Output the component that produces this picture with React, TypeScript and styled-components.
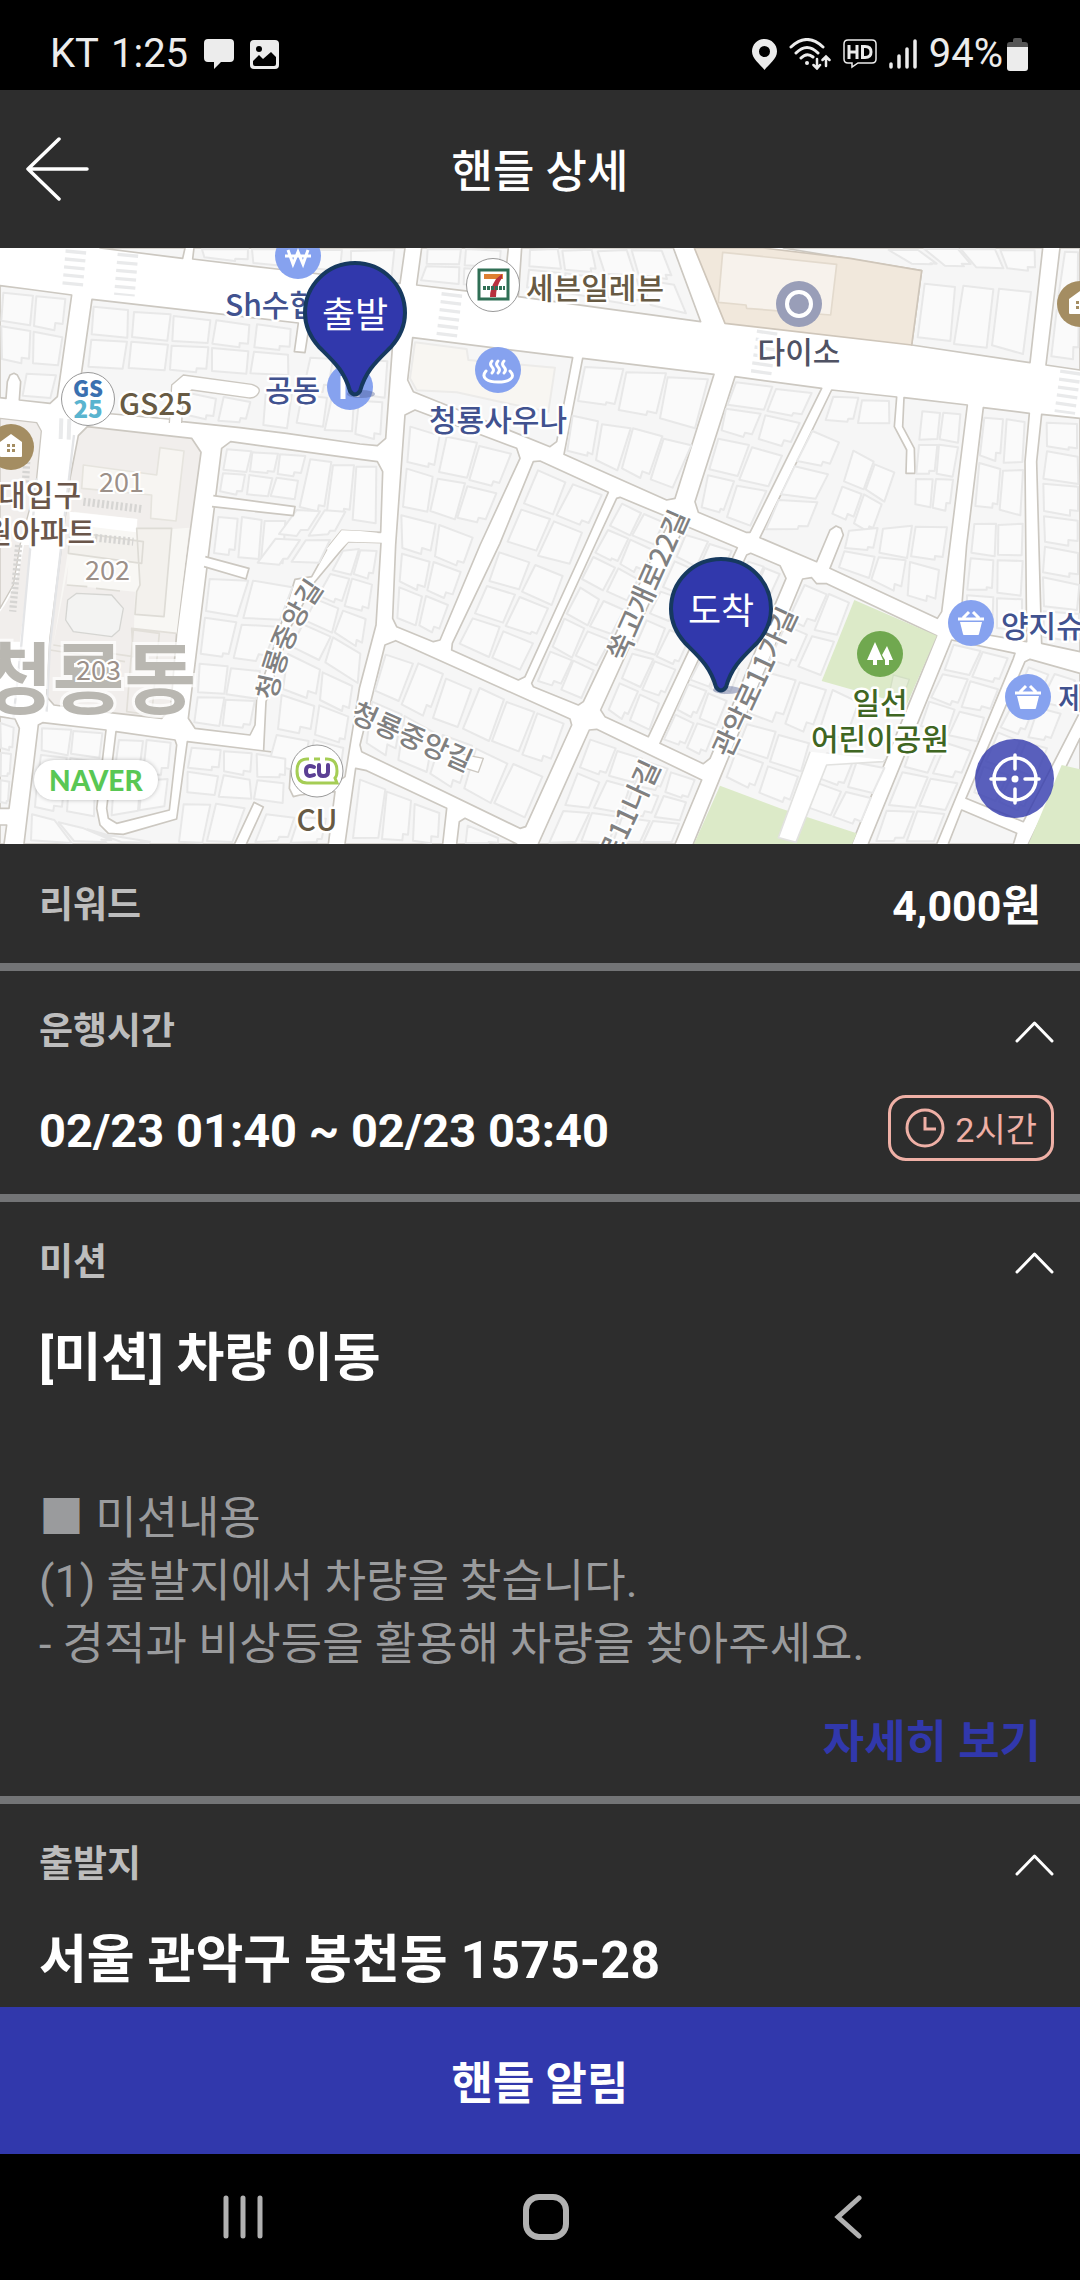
import React, { useState } from "react";
import styled, { createGlobalStyle } from "styled-components";

const color = {
  panel: "#2d2d2d",
  line: "#737476",
  accent: "#3138ac",
  muted: "#bdbdbd",
  body: "#9a9b9d",
  coral: "#efb0a6",
  status: "#ececec",
  nav: "#b1b1b1",
};

const Global = createGlobalStyle`
  *, *::before, *::after { box-sizing: border-box; }
  body { margin: 0; background: #000; }
  button { font: inherit; color: inherit; background: none; border: 0; padding: 0; cursor: pointer; }
  h1, h2, h3, p { margin: 0; }
  svg { display: block; flex: none; }
`;

const Screen = styled.div`
  display: flex;
  flex-direction: column;
  height: 100vh;
  background: ${color.panel};
  color: #fff;
  font-family: Roboto, "Noto Sans CJK KR", sans-serif;
`;

const StatusBar = styled.div`
  flex: none;
  display: flex;
  align-items: center;
  justify-content: space-between;
  height: 90px;
  padding: 18px 52px 0 50px;
  background: #000;
  color: ${color.status};
  font-size: 40px;
  line-height: 48px;
`;

const StatusGroup = styled.div<{ $gap: number }>`
  display: flex;
  align-items: center;
  gap: ${(p) => p.$gap}px;
`;

const TopBar = styled.header`
  flex: none;
  display: grid;
  grid-template-columns: 120px 1fr 120px;
  align-items: center;
  height: 158px;
`;

const BackButton = styled.button`
  display: flex;
  align-items: center;
  height: 100%;
  padding-left: 24px;
`;

const PageTitle = styled.h1`
  padding-top: 8px;
  text-align: center;
  font-size: 45px;
  font-weight: 500;
  line-height: 60px;
`;

const Scroll = styled.main`
  flex: 1;
  min-height: 0;
  overflow-y: auto;
  scrollbar-width: none;
`;

const MapFrame = styled.div`
  position: relative;
  height: 596px;
  overflow: hidden;
  background: #fff;
`;

const MapCanvas = styled.svg`
  width: 100%;
  height: 100%;
  font-family: "Noto Sans CJK KR", sans-serif;
`;

const MapBadge = styled.a`
  position: absolute;
  left: 34px;
  bottom: 44px;
  padding: 0 15px;
  border-radius: 20px;
  background: #fff;
  box-shadow: 0 0 4px rgba(0, 0, 0, 0.25);
  color: #59c754;
  font-family: Lato, "Open Sans", sans-serif;
  font-size: 28px;
  font-weight: 900;
  line-height: 40px;
  text-decoration: none;
`;

const LocateButton = styled.button`
  position: absolute;
  right: 26px;
  bottom: 26px;
  display: grid;
  place-items: center;
  width: 79px;
  height: 79px;
  border-radius: 50%;
  background: rgba(49, 56, 172, 0.8);
`;

const Section = styled.section`
  & + & {
    border-top: 8px solid ${color.line};
  }
`;

const SummaryRow = styled.div`
  display: flex;
  align-items: center;
  justify-content: space-between;
  height: 119px;
  padding: 4px 39px 0;
`;

const Label = styled.span`
  color: ${color.muted};
  font-size: 37px;
  font-weight: 700;
  line-height: 48px;
`;

const Amount = styled.strong`
  font-size: 43px;
  font-weight: 700;
  line-height: 56px;
`;

const SectionToggle = styled.button`
  display: flex;
  align-items: center;
  justify-content: space-between;
  width: 100%;
  height: 122px;
  padding: 0 26px 0 39px;
`;

const ScheduleRow = styled.div`
  display: flex;
  align-items: center;
  justify-content: space-between;
  height: 101px;
  padding: 0 26px 32px 39px;
`;

const Period = styled.span`
  padding-top: 6px;
  font-size: 47px;
  font-weight: 700;
  line-height: 60px;
`;

const Duration = styled.span`
  display: flex;
  align-items: center;
  gap: 10px;
  height: 66px;
  padding: 0 14px;
  border: 3px solid ${color.coral};
  border-radius: 18px;
  color: ${color.coral};
  font-size: 34px;
  font-weight: 400;
`;

const Heading = styled.h2`
  padding: 2px 39px 0;
  font-size: 52px;
  font-weight: 700;
  line-height: 66px;
`;

const MissionText = styled.p`
  padding: 95px 39px 35px;
  color: ${color.body};
  font-size: 45px;
  line-height: 63px;
  white-space: pre-line;
`;

const MoreRow = styled.div`
  display: flex;
  justify-content: flex-end;
  padding: 0 39px 21px;
`;

const MoreButton = styled.button`
  color: ${color.accent};
  font-size: 45px;
  font-weight: 700;
  line-height: 64px;
`;

const PrimaryButton = styled.button`
  flex: none;
  width: 100%;
  height: 147px;
  background: ${color.accent};
  color: #fff;
  font-size: 45px;
  font-weight: 700;
`;

const NavBar = styled.nav`
  flex: none;
  display: flex;
  align-items: center;
  justify-content: space-between;
  height: 126px;
  padding: 0 161px 0 172px;
  background: #000;
`;

const NavButton = styled.button`
  display: grid;
  place-items: center;
  width: 142px;
  height: 100%;
`;

/* ---------- map data: three units to one pixel ---------- */

const blocks = [
  "0,122 80,132 215,150 172,455 150,475 58,465 62,410 52,390 42,385 30,390 22,410 18,460 0,458",
  "300,9 548,40 555,9",
  "582,9 578,42 830,72 1200,115 1215,9",
  "276,163 895,234 883,320 915,323 928,240 1180,268 1157,580 1132,602 1080,597 860,565 720,548 548,530 505,522 340,507 228,500",
  "665,610 692,590 1080,643 1132,650 1148,680 1142,862 1025,856 985,905 935,995 885,1003 830,1180 770,1360 765,1440 750,1470 585,1450 565,1420",
  "1045,890 1143,893 1128,1140 1078,1330 1035,1595 1020,1605 788,1575 798,1370 870,1150 945,1010",
  "1238,278 1718,338 1670,590 1650,605 1240,440 1223,405",
  "1215,510 1245,495 1550,610 1560,640 1440,900 1320,1185 1300,1190 1190,1145 1178,1120 1187,900",
  "1600,650 1620,648 1825,742 1755,900 1575,1295 1555,1305 1355,1215 1357,1195 1500,895",
  "1850,760 1860,757 2012,820 1750,1370 1735,1380 1600,1325 1595,1315 1785,900",
  "1748,340 2142,388 2025,760 2000,765 1692,628",
  "2050,850 2062,845 2212,908 1945,1475 1815,1415 1802,1395",
  "2240,930 2252,925 2340,962 2358,1000 2130,1540 2110,1556 1980,1495",
  "2205,395 2465,430 2250,862 2238,862 2095,802 2085,770",
  "2495,435 2690,456 2683,545 2720,615 2718,685 2745,685 2743,610 2708,545 2712,458 2902,480 2850,900 2825,1100 2812,1120 2490,970 2530,870 2523,850 2508,843 2490,855 2450,950 2280,878",
  "2950,488 3088,505 3075,650 3080,1190 2880,1155 2900,900",
  "3125,508 3240,520 3240,1220 3125,1195 3110,650",
  "1265,9 1250,120 1390,137 1510,150 1525,9",
  "1565,9 1555,155 2102,230 2020,9",
  "2350,9 2765,77 2735,300 3090,353 3128,9",
  "3180,9 3138,360 3240,375 3240,9",
  "2408,1002 2435,998 2450,1016 2480,1016 2810,1172 2555,1797 2080,1797 2160,1600",
  "2855,1185 3045,1225 3040,1240 2810,1797 2605,1797",
  "3075,1250 3090,1243 3240,1285 3240,1400 3070,1730 2898,1660",
  "2885,1695 3050,1765 3040,1797 2845,1797",
  "3240,1480 3085,1797 3240,1797",
  "0,1415 45,1422 58,1450 27,1690 0,1690",
  "0,1740 20,1740 12,1797 0,1797",
  "115,1440 128,1433 318,1455 290,1690 300,1740 325,1765 370,1768 530,1722 562,1490 875,1528 868,1630 880,1655 900,1650 1005,1640 985,1797 72,1797",
  "348,1460 525,1485 530,1500 508,1695 350,1735 325,1720 320,1690",
  "1067,1570 1100,1577 1340,1690 1328,1797 1035,1797",
  "1378,1730 1395,1720 1550,1797 1370,1797",
  "1155,1200 1187,1187 1710,1422 1715,1440 1577,1745 1560,1750 1085,1520 1080,1500",
  "1768,1455 1790,1453 2105,1605 2025,1797 1615,1797",
];

/* four corners, clockwise from the upper left, then columns and rows of lots */
type Lots = [number, number, number, number, number, number, number, number, number, number];
const lots: Lots[] = [
  [0, 130, 205, 158, 180, 370, 0, 350, 2, 2],
  [70, 380, 180, 390, 160, 465, 65, 455, 1, 1],
  [600, 9, 1190, 9, 1180, 100, 600, 40, 4, 1],
  [276, 178, 880, 245, 870, 400, 255, 370, 5, 2],
  [930, 330, 1165, 340, 1150, 590, 880, 545, 3, 2],
  [560, 440, 760, 465, 740, 540, 555, 520, 2, 1],
  [790, 425, 880, 430, 865, 555, 780, 545, 1, 1],
  [675, 610, 920, 630, 885, 770, 655, 745, 3, 2],
  [930, 630, 1135, 660, 1130, 850, 890, 800, 3, 1],
  [650, 800, 860, 820, 850, 960, 635, 930, 3, 1],
  [890, 790, 1050, 790, 960, 960, 760, 960, 2, 2],
  [620, 985, 890, 1020, 790, 1260, 590, 1240, 2, 2],
  [590, 1250, 790, 1270, 750, 1460, 575, 1440, 2, 2],
  [1030, 910, 1135, 905, 1075, 1320, 860, 1200, 2, 4],
  [860, 1220, 1070, 1320, 1030, 1590, 800, 1570, 2, 3],
  [1225, 530, 1545, 620, 1450, 850, 1200, 790, 3, 2],
  [1200, 800, 1430, 870, 1315, 1175, 1190, 1130, 2, 3],
  [1610, 660, 1815, 745, 1710, 970, 1510, 900, 2, 2],
  [1500, 910, 1705, 985, 1565, 1290, 1370, 1205, 2, 3],
  [1860, 770, 2000, 825, 1885, 1080, 1740, 1010, 2, 3],
  [1735, 1020, 1880, 1090, 1745, 1365, 1605, 1310, 2, 3],
  [1750, 350, 2130, 395, 2090, 560, 1720, 470, 3, 1],
  [1710, 500, 2085, 590, 2020, 750, 1700, 620, 4, 1],
  [2060, 860, 2200, 915, 2085, 1160, 1940, 1110, 2, 3],
  [1935, 1120, 2080, 1170, 1945, 1465, 1815, 1400, 2, 3],
  [2245, 945, 2345, 980, 2240, 1240, 2110, 1180, 2, 3],
  [2105, 1220, 2225, 1270, 2115, 1540, 1985, 1490, 2, 3],
  [2205, 405, 2450, 440, 2370, 610, 2150, 560, 2, 2],
  [2145, 570, 2365, 620, 2250, 850, 2095, 790, 2, 2],
  [2495, 445, 2675, 465, 2670, 545, 2460, 535, 2, 1],
  [2430, 550, 2530, 590, 2420, 860, 2290, 860, 1, 3],
  [2560, 610, 2690, 680, 2620, 870, 2490, 810, 2, 2],
  [2760, 490, 2890, 500, 2850, 800, 2740, 790, 2, 3],
  [2545, 850, 2845, 830, 2810, 1090, 2510, 970, 3, 2],
  [2950, 500, 3080, 515, 3065, 820, 2920, 790, 2, 2],
  [2915, 830, 3070, 830, 3070, 1170, 2890, 1140, 2, 3],
  [3130, 520, 3240, 530, 3240, 1200, 3120, 1180, 1, 7],
  [1270, 9, 1515, 9, 1505, 130, 1260, 110, 2, 2],
  [1580, 9, 1990, 9, 2070, 210, 1570, 130, 4, 2],
  [2640, 9, 3110, 9, 3110, 80, 2740, 60, 4, 1],
  [2770, 90, 3100, 130, 3080, 340, 2745, 290, 3, 1],
  [3190, 9, 3240, 9, 3240, 350, 3150, 340, 1, 2],
  [2410, 1015, 2560, 1065, 2465, 1300, 2300, 1250, 2, 2],
  [2300, 1260, 2590, 1360, 2540, 1500, 2240, 1420, 3, 1],
  [2235, 1430, 2440, 1490, 2370, 1690, 2165, 1600, 2, 2],
  [2475, 1520, 2660, 1560, 2580, 1750, 2410, 1690, 2, 2],
  [2860, 1195, 3035, 1235, 2930, 1500, 2750, 1450, 2, 3],
  [2745, 1465, 2920, 1510, 2800, 1797, 2615, 1797, 2, 3],
  [3080, 1260, 3235, 1295, 3070, 1710, 2910, 1650, 2, 4],
  [0, 1430, 45, 1440, 25, 1680, 0, 1680, 1, 3],
  [125, 1440, 310, 1460, 285, 1720, 95, 1690, 2, 3],
  [90, 1700, 320, 1770, 510, 1797, 80, 1797, 3, 1],
  [350, 1470, 520, 1490, 500, 1690, 330, 1720, 2, 2],
  [570, 1500, 865, 1535, 860, 1680, 550, 1650, 3, 2],
  [545, 1660, 740, 1680, 700, 1797, 530, 1797, 2, 1],
  [790, 1700, 990, 1720, 975, 1797, 750, 1797, 2, 1],
  [1075, 1590, 1325, 1700, 1320, 1797, 1050, 1797, 3, 1],
  [1390, 1730, 1500, 1780, 1500, 1797, 1385, 1797, 1, 1],
  [1160, 1210, 1700, 1430, 1650, 1570, 1110, 1350, 6, 1],
  [1105, 1360, 1640, 1585, 1570, 1735, 1090, 1500, 5, 1],
  [1770, 1470, 2095, 1605, 2020, 1797, 1640, 1797, 4, 3],
];

const wobble = (n: number) => {
  const v = Math.sin(n * 127.1) * 43758.5453;
  return v - Math.floor(v) - 0.5;
};

const buildings: string[] = lots.flatMap((lot, index) => {
  const [ax, ay, bx, by, cx, cy, dx, dy, cols, rows] = lot;
  const at = (u: number, v: number) => {
    const x = ax * (1 - u) * (1 - v) + bx * u * (1 - v) + cx * u * v + dx * (1 - u) * v;
    const y = ay * (1 - u) * (1 - v) + by * u * (1 - v) + cy * u * v + dy * (1 - u) * v;
    return `${Math.round(x)},${Math.round(y)}`;
  };
  const result: string[] = [];
  for (let r = 0; r < rows; r += 1) {
    for (let c = 0; c < cols; c += 1) {
      const seed = index * 31 + r * 7 + c * 3 + 1;
      const u = (f: number, k: number) => (c + f + wobble(seed + k) * 0.1) / cols;
      const v = (f: number, k: number) => (r + f + wobble(seed + k) * 0.1) / rows;
      const corners = [at(u(0.07, 1), v(0.08, 2)), at(u(0.93, 3), v(0.08, 4))];
      if (wobble(seed + 11) > 0) {
        const nu = u(0.72, 5);
        const nv = v(0.8, 6);
        corners.push(at(u(0.93, 3), nv), at(nu, nv), at(nu, v(0.94, 7)));
      } else {
        corners.push(at(u(0.93, 5), v(0.92, 6)));
      }
      corners.push(at(u(0.07, 8), v(0.92, 9)));
      result.push(corners.join(" "));
    }
  }
  return result;
});

const crossings = [
  "M228,16 L217,132",
  "M384,26 L373,152",
  "M1356,145 L1340,275",
  "M2302,258 L2283,388",
  "M3212,378 L3194,505",
];

type PlaceProps = { x: number; y: number; fill: string; anchor?: "start" | "middle" | "end"; size?: number; children: string };
const Place = ({ x, y, fill, anchor = "start", size = 30, children }: PlaceProps) => (
  <text x={x} y={y} fill={fill} textAnchor={anchor} fontSize={size} fontWeight={500} stroke="#fff" strokeWidth={5} strokeLinejoin="round" paintOrder="stroke">
    {children}
  </text>
);

const Street = ({ x, y, turn, anchor = "middle", children }: { x: number; y: number; turn: number; anchor?: "middle" | "end"; children: string }) => (
  <text transform={`translate(${x} ${y}) rotate(${turn})`} y={10} textAnchor={anchor} fill="#808080" fontSize={28} fontWeight={500} stroke="#fff" strokeWidth={4} strokeLinejoin="round" paintOrder="stroke">
    {children}
  </text>
);

const Pin = ({ x, y, children }: { x: number; y: number; children: string }) => (
  <g transform={`translate(${x} ${y})`}>
    <ellipse cx={6} cy={81} rx={14} ry={4} fill="#4a5a90" opacity={0.4} />
    <path
      d="M0,-50 A50,50 0 0 1 50,0 C50,15 44,25 36,34 C22,48 11,57 5,78 Q0,85 -5,78 C-11,57 -22,48 -36,34 C-44,25 -50,15 -50,0 A50,50 0 0 1 0,-50 Z"
      fill="#3138ac"
      stroke="#16395f"
      strokeWidth={4}
    />
    <text y={15} textAnchor="middle" fontSize={36} fontWeight={400} fill="#fff">
      {children}
    </text>
  </g>
);

const House = ({ x, y }: { x: number; y: number }) => (
  <g transform={`translate(${x} ${y})`}>
    <circle r={23} fill="#a48d62" />
    <path d="M-11,9 V-5 L0,-13 L11,-5 V9 Q11,10 10,10 H-10 Q-11,10 -11,9 Z" fill="#fff" />
    <path d="M-4,-3 h3 v3 h-3 z M1,-3 h3 v3 h-3 z M-4,2 h3 v3 h-3 z M1,2 h3 v3 h-3 z" fill="#a48d62" />
  </g>
);

const Basket = ({ x, y }: { x: number; y: number }) => (
  <g transform={`translate(${x} ${y})`}>
    <circle r={23} fill="#86a2ef" />
    <path d="M-13,-4 H13 M-8,-5 L-2,-11 M8,-5 L2,-11" stroke="#fff" strokeWidth={3} fill="none" />
    <path d="M-11,-1 H11 L8,11 Q8,12 7,12 H-7 Q-8,12 -8,11 Z" fill="#fff" />
  </g>
);

const navy = "#41528f";
const brown = "#675a43";

const RouteMap = () => (
  <MapCanvas viewBox="0 0 1080 596" preserveAspectRatio="xMidYMid slice" role="img" aria-label="출발지와 도착지 지도">
    <g transform="translate(0 -3) scale(0.333333)" strokeLinejoin="round">
      {blocks.map((points) => (
        <polygon key={points} points={points} fill="#f6f6f6" stroke="#ccc8c1" strokeWidth={5} />
      ))}
      {buildings.map((points) => (
        <polygon key={points} points={points} fill="#fafafa" stroke="#e8e8e8" strokeWidth={6} />
      ))}
      <polygon points="2083,9 2175,235 2735,300 2765,77 2550,40 2290,9" fill="#f1e8dc" stroke="#cfc6ba" strokeWidth={5} />
      <polygon points="2168,22 2510,58 2492,210 2240,190 2238,180 2155,172" fill="#f7f2ec" stroke="#e3dacd" strokeWidth={5} />
      <path d="M1245,292 L1400,312 L1405,345 L1665,368 L1645,500 L1520,475 L1370,442 L1250,436 L1230,400 Z" fill="#f8f6f2" stroke="#ecebe9" strokeWidth={6} />
      <path d="M508,534 L515,420 L550,390 L755,418 Q786,428 775,445 Q765,463 740,458 L575,435 L550,450 L545,534" fill="#fff" stroke="#ccc8c1" strokeWidth={4} />
      <path d="M640,752 L885,785 L880,812 L636,785" fill="#fff" stroke="#ccc8c1" strokeWidth={5} />
      <path d="M616,935 L747,970 L738,1002 L612,965" fill="#fff" stroke="#ccc8c1" strokeWidth={5} />
      <path d="M1132,863 L1080,858 L1025,856 L980,912 L1005,930 L1045,890 L1150,893" fill="#fff" />
      <path d="M702,1800 L762,1672 L790,1686 L738,1800" fill="#fff" stroke="#ccc8c1" strokeWidth={5} />
      <path d="M1375,1525 L1450,1540 L1435,1582 L1350,1555" fill="#fff" stroke="#ccc8c1" strokeWidth={4} />

      <polygon points="235,572 262,545 575,580 603,622 565,900 530,1165 512,1390 485,1420 330,1403 162,1380 140,1355 150,1180 185,900 210,700" fill="#f1eeec" stroke="#ccc8c1" strokeWidth={5} />
      <path d="M250,660 L470,690 L480,608 L552,618 L528,828 L452,820 L455,750 L245,730 Z" fill="#f7f5f2" stroke="#e6e4de" strokeWidth={5} />
      <path d="M222,800 L412,822 L412,860 L568,848 L530,1165 L402,1150 L405,1040 L200,1020 L205,960 L160,1200 Z" fill="#f8f7f4" />
      <path d="M208,800 L412,822 L408,862 L210,838 Z" fill="#fff" />
      <path d="M210,860 L430,890 L425,955 L205,925 Z M410,850 L515,850 L492,1115 L405,1108 L410,1040 L420,1020 Z M200,1020 L262,1025 M288,1030 L360,1038" fill="#f3f1ed" stroke="#dedcd6" strokeWidth={5} />
      <path d="M160,1200 L400,1235 L395,1150 L530,1165 M400,1155 L478,1165 L455,1410 L380,1400 Z M150,1215 L375,1250" fill="none" stroke="#e2dfd9" strokeWidth={5} />
      <path d="M230,1045 L335,1050 L370,1090 L358,1155 L335,1175 L220,1160 L197,1125 L203,1065 Z" fill="#f3f3f2" stroke="#d5d5d2" strokeWidth={4} />
      <path d="M250,770 L425,792 M285,878 L400,890" stroke="#d6d5d3" strokeWidth={24} strokeDasharray="7 7" />
      <polygon points="0,520 110,533 124,558 108,720 60,900 40,1020 0,1090" fill="#f1eeec" stroke="#ccc8c1" strokeWidth={4} />
      <path d="M0,1100 Q50,1040 72,900 L95,900 L60,1190 L0,1190 Z" fill="#f1eeec" />
      <path d="M80,650 L76,720 M56,900 L38,1100" stroke="#d6d5d3" strokeWidth={22} strokeDasharray="7 7" />
      <path d="M110,700 L64,1200 L40,1420" stroke="#e4e5e7" strokeWidth={7} fill="none" />
      <path d="M222,570 L200,760 L150,1200 L140,1400" stroke="#e4e5e7" strokeWidth={7} fill="none" />
      <path d="M184,520 L182,582 M208,522 L206,584" stroke="#e9eaeb" strokeWidth={12} />

      <polygon points="2563,1065 2810,1172 2720,1380 2465,1308" fill="#dceac8" />
      <path d="M2680,1290 L2728,1303 L2708,1360 L2668,1345 Z" fill="#e5edd8" stroke="#d3dfc4" strokeWidth={4} />
      <polygon points="2160,1622 2340,1690 2570,1765 2556,1797 2082,1797" fill="#dceac8" />
      <polygon points="3185,1560 3240,1573 3240,1797 3086,1797" fill="#dceac8" />
      <path d="M2430,1520 L2335,1778 L2388,1792 L2480,1560 L2650,1550 L2655,1545" fill="#fff" stroke="#e2e2e0" strokeWidth={5} />
      {crossings.map((d) => (
        <path key={d} d={d} stroke="#e9eaeb" strokeWidth={62} strokeDasharray="10 14" fill="none" />
      ))}
    </g>

    <circle cx={298} cy={8} r={23} fill="#86a2ef" />
    <path d="M288,2 L293,16 L298,4 L303,16 L308,2 M285,8 H311" stroke="#fff" strokeWidth={3} fill="none" />
    <circle cx={350} cy={139} r={23} fill="#86a2ef" />
    <path d="M343,128 V151 M357,128 V149" stroke="#fff" strokeWidth={5} />
    <circle cx={498} cy={122} r={23} fill="#86a2ef" />
    <path d="M486,123 C480,130 488,134 498,134 C508,134 517,130 510,123" stroke="#fff" strokeWidth={3} fill="none" strokeLinecap="round" />
    <path d="M492,113 q-3,3 0,6 q3,3 0,6 M498,113 q-3,3 0,6 q3,3 0,6 M504,113 q-3,3 0,6 q3,3 0,6" stroke="#fff" strokeWidth={3} fill="none" strokeLinecap="round" />
    <circle cx={799} cy={56} r={23} fill="#999eb8" />
    <circle cx={799} cy={56} r={12} fill="none" stroke="#fff" strokeWidth={4} />
    <House x={11} y={199} />
    <House x={1080} y={56} />
    <Basket x={971} y={375} />
    <Basket x={1028} y={449} />
    <circle cx={880} cy={406} r={23} fill="#70a84f" />
    <path d="M875,394 L883,412 H877 V417 H873 V412 H867 Z M887,398 L893,412 H889 V417 H885 V412 L882,407 Z" fill="#fff" />

    <circle cx={88} cy={151} r={26.500} fill="#fff" stroke="#999" />
    <text x={88} y={149} textAnchor="middle" fontSize={22} fontWeight={900} fill="#3a70b0">GS</text>
    <text x={88} y={170} textAnchor="middle" fontSize={24} fontWeight={900} fill="#59b4cf">25</text>
    <circle cx={493} cy={37} r={26.500} fill="#fff" stroke="#999" />
    <rect x={479} y={22} width={29} height={29} fill="#fff" stroke="#2f6f55" strokeWidth={3} />
    <path d="M484,26 H503 V31 H484 Z" fill="#dd7f32" />
    <path d="M496,31 L502,26 V30 Q496,38 496,49 H490 Q490,40 496,31 Z" fill="#b8303f" />
    <path d="M483,40 H505" stroke="#2f6f55" strokeWidth={4} strokeDasharray="3 1" />
    <circle cx={317} cy={523} r={26} fill="#fff" stroke="#999" />
    <path d="M309,511 H307 Q297,511 297,523 Q297,535 307,535 H337 L335,530 Q337,528 337,523 Q337,511 327,511 H325 M314,511 H320" fill="none" stroke="#a5cd55" strokeWidth={3} />
    <path d="M314,519 Q306,516 306,523 Q306,530 314,527 M319,517 V524 Q319,528 323,528 Q328,528 328,524 V517" fill="none" stroke="#5b3f94" strokeWidth={4} strokeLinecap="round" />

    <text x={196} y={460} textAnchor="end" fontSize={78} fontWeight={700} fill="#b9b7b1" stroke="#fff" strokeOpacity={0.7} strokeWidth={6} paintOrder="stroke">청룡동</text>
    <g fontSize={27} fill="#9c9089" stroke="#fff" strokeWidth={4} paintOrder="stroke">
      <text x={99} y={244}>201</text>
      <text x={85} y={332}>202</text>
      <text x={76} y={432}>203</text>
    </g>
    <Place x={225} y={68} fill={navy}>Sh수협</Place>
    <Place x={265} y={153} fill={navy}>공동</Place>
    <Place x={429} y={183} fill={navy}>청룡사우나</Place>
    <Place x={1001} y={389} fill={navy}>양지슈퍼</Place>
    <Place x={1058} y={461} fill={navy}>제일</Place>
    <Place x={119} y={167} fill={brown}>GS25</Place>
    <Place x={526} y={51} fill={brown}>세븐일레븐</Place>
    <Place x={317} y={583} anchor="middle" fill={brown}>CU</Place>
    <Place x={799} y={115} anchor="middle" fill="#4f5263">다이소</Place>
    <Place x={81} y={258} anchor="end" fill="#6a564a">대입구</Place>
    <Place x={95} y={295} anchor="end" fill="#6a564a">원아파트</Place>
    <Place x={880} y={466} anchor="middle" fill="#3f6622">일선</Place>
    <Place x={880} y={502} anchor="middle" fill="#3f6622">어린이공원</Place>

    <path id="alley" d="M276,453 Q286,392 325,339" fill="none" />
    <text fill="#808080" fontSize={27} fontWeight={500} stroke="#fff" strokeWidth={4} paintOrder="stroke">
      <textPath href="#alley">청룡중앙길</textPath>
    </text>
    <Street x={412} y={489} turn={24}>청룡중앙길</Street>
    <Street x={648} y={337} turn={-66}>쑥고개로22길</Street>
    <Street x={755} y={434} turn={-65}>관악로11가길</Street>
    <Street x={652} y={514} turn={-65} anchor="end">관악로11나길</Street>

    <Pin x={355} y={65}>출발</Pin>
    <Pin x={721} y={361}>도착</Pin>
  </MapCanvas>
);

/* ---------- icons ---------- */

const ChatIcon = () => (
  <svg width="30" height="30" viewBox="0 0 30 30" fill={color.status} aria-hidden="true">
    <path d="M4,0 H26 Q30,0 30,4 V19 Q30,23 26,23 H17 L10,30 V23 H4 Q0,23 0,19 V4 Q0,0 4,0 Z" />
  </svg>
);

const PhotoIcon = () => (
  <svg width="29" height="29" viewBox="0 0 29 29" aria-hidden="true">
    <rect width="29" height="29" rx="4" fill={color.status} />
    <circle cx="9" cy="9" r="3" fill="#000" />
    <path d="M3,21 L9,15 L13,19 L21,12 L26,17 V24 Q26,26 24,26 H5 Q3,26 3,24 Z" fill="#000" />
  </svg>
);

const PlaceIcon = () => (
  <svg width="25" height="31" viewBox="0 0 25 31" fill={color.status} aria-hidden="true">
    <path fillRule="evenodd" d="M12.500,0 C19.500,0 25,5.500 25,12.500 C25,20 17,25 12.500,31 C8,25 0,20 0,12.500 C0,5.500 5.500,0 12.500,0 Z M12.500,7 A5.500,5.500 0 1 0 12.500,18 A5.500,5.500 0 1 0 12.500,7 Z" />
  </svg>
);

const WifiIcon = () => (
  <svg width="42" height="32" viewBox="0 0 42 32" fill="none" stroke={color.status} strokeWidth="3" strokeLinecap="round" aria-hidden="true">
    <path d="M2,9 Q18,-6 34,9 M7,15 Q18,4 29,15 M12,20 Q18,14 24,19" />
    <circle cx="18" cy="25" r="2" fill={color.status} stroke="none" />
    <path d="M28,21 V30 M24.500,27 L28,30.500 L31,27 M37,28 V19 M33.500,22 L37,18.500 L40.500,22" strokeWidth="2.500" />
  </svg>
);

const HdIcon = () => (
  <svg width="34" height="30" viewBox="0 0 34 30" fill="none" stroke={color.status} aria-hidden="true">
    <path d="M5,1 H29 Q33,1 33,5 V20 Q33,24 29,24 H15 L9,28 V24 H5 Q1,24 1,20 V5 Q1,1 5,1 Z" strokeWidth="1.500" />
    <path d="M6,6 V20 M14,6 V20 M6,13 H14 M19.500,7.500 V18.500 H22 Q28,18.500 28,13 Q28,7.500 22,7.500 Z" strokeWidth="3" />
  </svg>
);

const SignalIcon = () => (
  <svg width="28" height="30" viewBox="0 0 28 30" stroke={color.status} strokeWidth="3.500" strokeLinecap="round" aria-hidden="true">
    <path d="M2,25 V28 M10,17 V28 M18,10 V28 M26,2 V28" />
  </svg>
);

const BatteryIcon = () => (
  <svg width="21" height="33" viewBox="0 0 21 33" aria-hidden="true">
    <path d="M6,2 Q6,0 8,0 H13 Q15,0 15,2 V4 H18 Q21,4 21,7 V9 H0 V7 Q0,4 3,4 H6 Z" fill="#555" />
    <path d="M0,9 H21 V30 Q21,33 18,33 H3 Q0,33 0,30 Z" fill={color.status} />
  </svg>
);

const ArrowIcon = () => (
  <svg width="66" height="64" viewBox="0 0 66 64" fill="none" stroke="#fff" strokeWidth="3.500" strokeLinecap="round" strokeLinejoin="round" aria-hidden="true">
    <path d="M35,2 L4,32 L35,62 M4,32 H63" />
  </svg>
);

const ChevronIcon = ({ open }: { open: boolean }) => (
  <svg width="39" height="22" viewBox="0 0 39 22" fill="none" stroke="#fff" strokeWidth="3" strokeLinecap="round" strokeLinejoin="round" aria-hidden="true">
    <path d={open ? "M2,20 L19.500,2 L37,20" : "M2,2 L19.500,20 L37,2"} />
  </svg>
);

const ClockIcon = () => (
  <svg width="40" height="40" viewBox="0 0 40 40" fill="none" stroke={color.coral} strokeWidth="3" aria-hidden="true">
    <circle cx="20" cy="20" r="18" />
    <path d="M20,9 V21 H31" />
  </svg>
);

const LocateIcon = () => (
  <svg width="52" height="52" viewBox="0 0 52 52" fill="none" stroke="#fff" strokeWidth="3.500" strokeLinecap="round" aria-hidden="true">
    <circle cx="26" cy="26" r="21" />
    <circle cx="26" cy="26" r="3.500" fill="#fff" stroke="none" />
    <path d="M26,2 V16 M26,36 V50 M2,26 H16 M36,26 H50" />
  </svg>
);

type ToggleProps = { title: string; children: React.ReactNode };
const Fold = ({ title, children }: ToggleProps) => {
  const [open, setOpen] = useState(true);
  return (
    <Section>
      <SectionToggle type="button" aria-expanded={open} onClick={() => setOpen(!open)}>
        <Label>{title}</Label>
        <ChevronIcon open={open} />
      </SectionToggle>
      {open && children}
    </Section>
  );
};

export default function App() {
  return (
    <>
      <Global />
      <Screen>
        <StatusBar>
          <StatusGroup $gap={16}>
            <StatusGroup $gap={12}>
              <span>KT</span>
              <span>1:25</span>
            </StatusGroup>
            <ChatIcon />
            <PhotoIcon />
          </StatusGroup>
          <StatusGroup $gap={12}>
            <PlaceIcon />
            <WifiIcon />
            <HdIcon />
            <SignalIcon />
            <StatusGroup $gap={4}>
              <span>94%</span>
              <BatteryIcon />
            </StatusGroup>
          </StatusGroup>
        </StatusBar>

        <TopBar>
          <BackButton type="button" aria-label="뒤로">
            <ArrowIcon />
          </BackButton>
          <PageTitle>핸들 상세</PageTitle>
        </TopBar>

        <Scroll>
          <MapFrame>
            <RouteMap />
            <MapBadge href="#map">NAVER</MapBadge>
            <LocateButton type="button" aria-label="현재 위치">
              <LocateIcon />
            </LocateButton>
          </MapFrame>

          <Section>
            <SummaryRow>
              <Label>리워드</Label>
              <Amount>4,000원</Amount>
            </SummaryRow>
          </Section>

          <Fold title="운행시간">
            <ScheduleRow>
              <Period>02/23 01:40 ~ 02/23 03:40</Period>
              <Duration>
                <ClockIcon />
                2시간
              </Duration>
            </ScheduleRow>
          </Fold>

          <Fold title="미션">
            <Heading>[미션] 차량 이동</Heading>
            <MissionText>
              {"■ 미션내용\n(1) 출발지에서 차량을 찾습니다.\n- 경적과 비상등을 활용해 차량을 찾아주세요."}
            </MissionText>
            <MoreRow>
              <MoreButton type="button">자세히 보기</MoreButton>
            </MoreRow>
          </Fold>

          <Fold title="출발지">
            <Heading>서울 관악구 봉천동 1575-28</Heading>
          </Fold>
        </Scroll>

        <PrimaryButton type="button">핸들 알림</PrimaryButton>

        <NavBar>
          <NavButton type="button" aria-label="최근 앱">
            <svg width="42" height="44" viewBox="0 0 42 44" stroke={color.nav} strokeWidth="5" strokeLinecap="round" aria-hidden="true">
              <path d="M4,3 V41 M21,3 V41 M38,3 V41" />
            </svg>
          </NavButton>
          <NavButton type="button" aria-label="홈">
            <svg width="48" height="48" viewBox="0 0 48 48" fill="none" stroke={color.nav} strokeWidth="6" aria-hidden="true">
              <rect x="4" y="4" width="40" height="40" rx="13" />
            </svg>
          </NavButton>
          <NavButton type="button" aria-label="뒤로 가기">
            <svg width="28" height="44" viewBox="0 0 28 44" fill="none" stroke={color.nav} strokeWidth="5" strokeLinecap="round" aria-hidden="true">
              <path d="M25,3 L4,22 L25,41" />
            </svg>
          </NavButton>
        </NavBar>
      </Screen>
    </>
  );
}
